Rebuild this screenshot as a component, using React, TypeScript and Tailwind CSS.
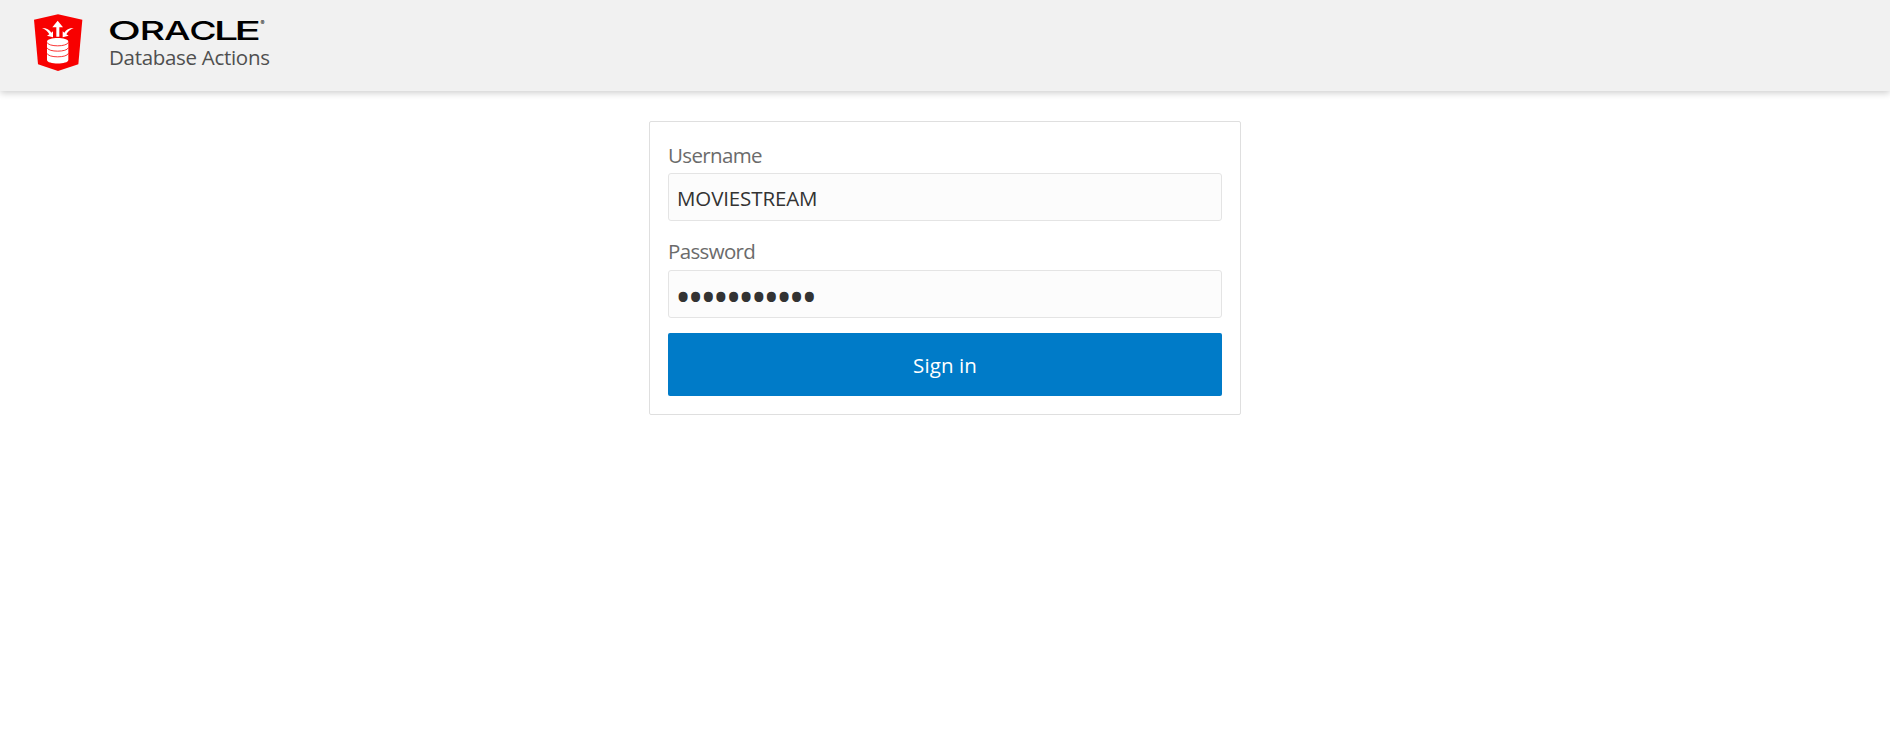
import React, { useState } from "react";

function ShieldLogo() {
  return (
    <svg viewBox="42 27 147 174" className="h-[58px] w-[49px] shrink-0" aria-hidden="true">
      <path d="M42 44 114 28 187 44 175 178 114 198 54 178Z" fill="#f80000" />
      <g fill="#fff">
        <path d="M113 47 129 67H118V95H109V67H97Z" />
        <path d="M66 69C80 69 89 75 94 83L99 79 99 97 81 92 88 88C84 80 77 74 66 69Z" />
        <path d="M161 69C147 69 138 75 133 83L128 79 128 97 146 92 139 88C143 80 150 74 161 69Z" />
        <path d="M81 110C81 95 145 95 145 110V165C145 179 81 179 81 165Z" />
      </g>
      <path
        d="M81 112C84 126 142 126 145 112M81 128C84 142 142 142 145 128M81 145C84 159 142 159 145 145"
        fill="none"
        stroke="#f80000"
        strokeWidth="2.4"
      />
    </svg>
  );
}

const letters = [
  { char: "O", x: -1.3, width: 33.2 },
  { char: "R", x: 30.6, width: 25.6 },
  { char: "A", x: 55, width: 26.5 },
  { char: "C", x: 80.2, width: 27.4 },
  { char: "L", x: 104.7, width: 24.6 },
  { char: "E", x: 125.2, width: 26.8 },
];

function Wordmark() {
  return (
    <svg
      viewBox="0 0 160 24"
      className="block h-[24px] w-[160px] overflow-visible"
      role="img"
      aria-label="Oracle"
    >
      <text
        y="20.5"
        fontSize="26"
        fontWeight="500"
        fontFamily="Inter, sans-serif"
      >
        {letters.map((l) => (
          <tspan key={l.char} x={l.x} textLength={l.width} lengthAdjust="spacingAndGlyphs">
            {l.char}
          </tspan>
        ))}
      </text>
      <text x="151.5" y="6" fontSize="6" fontFamily="Inter, sans-serif">®</text>
    </svg>
  );
}

const fieldClass =
  "block h-12 w-full rounded-[3px] border border-[#e4e4e4] bg-[#fcfcfc] text-[#333] outline-none";

export default function App() {
  const [username, setUsername] = useState("MOVIESTREAM");
  const [password, setPassword] = useState("moviestream");

  return (
    <div className="min-h-screen bg-white font-['Open_Sans',sans-serif] text-[20.5px]">
      <header className="flex h-[91px] items-start bg-[#f1f1f1] pl-[34px] pt-[14px] shadow-[0_2px_7px_rgba(0,0,0,0.2)]">
        <ShieldLogo />
        <div className="ml-[26px] pt-[5px]">
          <Wordmark />
          <h1 className="whitespace-nowrap leading-[28px] tracking-[-0.3px] text-[#4f4f4f]">
            Database Actions
          </h1>
        </div>
      </header>
      <main className="flex justify-center pt-[30px]">
        <form
          onSubmit={(e) => e.preventDefault()}
          className="h-[294px] w-[592px] rounded-[2px] border border-[#dfdfdf] px-[18px] pt-[19px]"
        >
          <label htmlFor="username" className="block h-8 leading-[28px] tracking-[-0.65px] text-[#6b6b6b]">
            Username
          </label>
          <input
            id="username"
            value={username}
            onChange={(e) => setUsername(e.target.value)}
            className={`${fieldClass} px-[8px] pt-px tracking-[-0.12px]`}
          />
          <label
            htmlFor="password"
            className="mt-[15px] block h-[34px] leading-[30px] tracking-[-0.65px] text-[#6b6b6b]"
          >
            Password
          </label>
          <input
            id="password"
            type="password"
            value={password}
            onChange={(e) => setPassword(e.target.value)}
            className={`${fieldClass} px-[6px] pt-[6px] text-[43px] tracking-[-3.55px]`}
          />
          <button
            type="submit"
            className="mt-[15px] block h-[63px] w-full rounded-[2px] bg-[#007bc8] pt-px tracking-[0.1px] text-white"
          >
            Sign in
          </button>
        </form>
      </main>
    </div>
  );
}
